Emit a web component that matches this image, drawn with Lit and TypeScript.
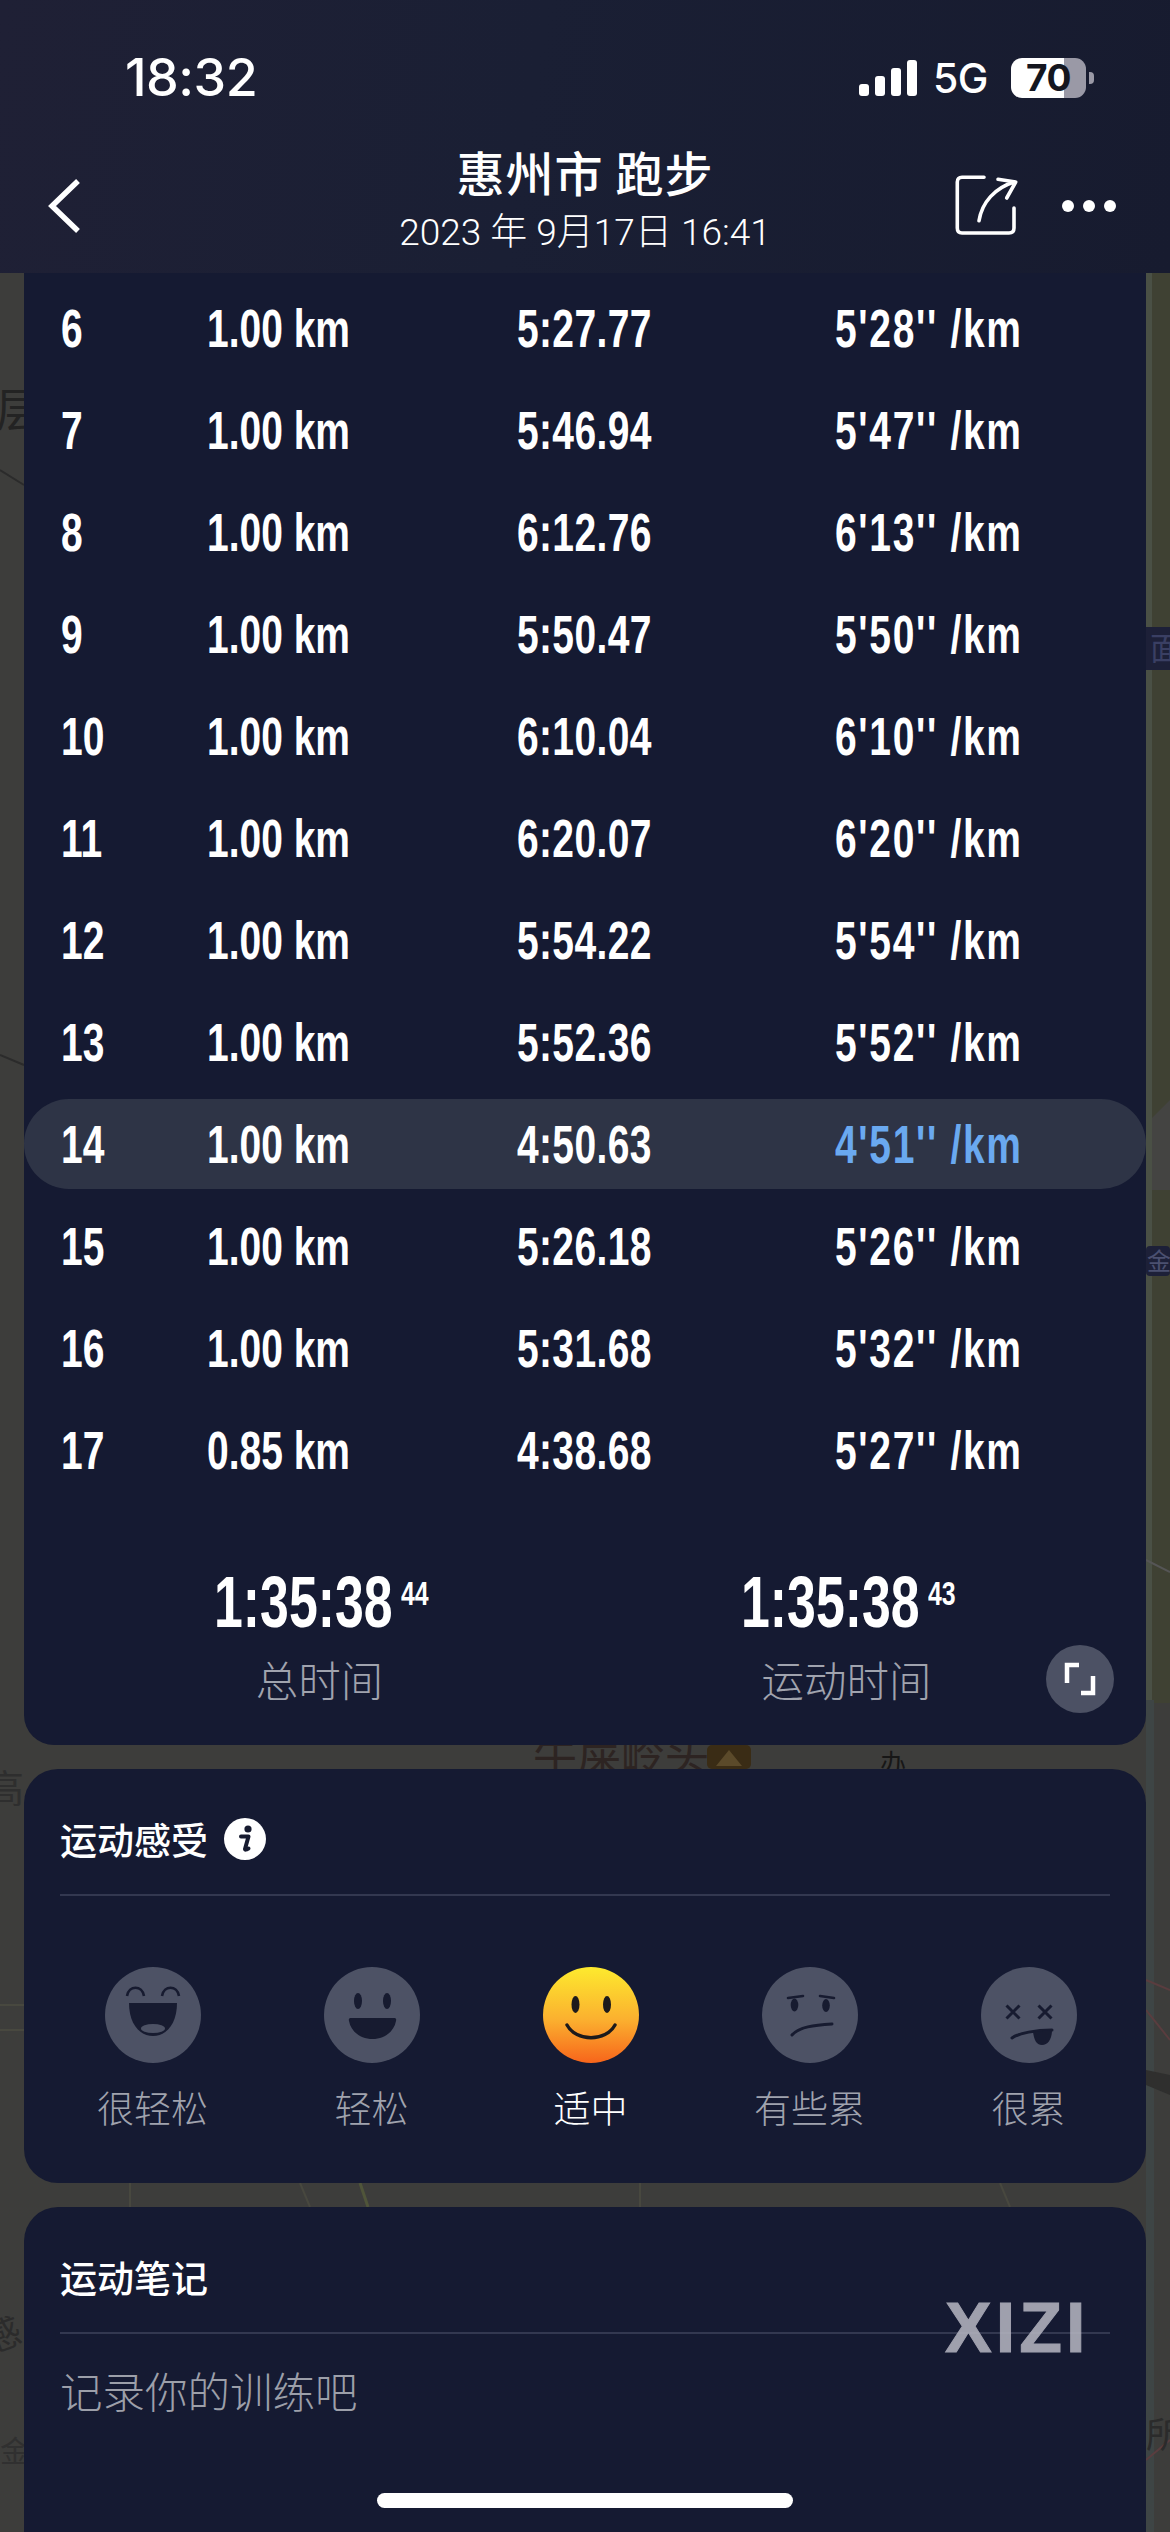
import { LitElement, html, css, svg } from "lit";
import { customElement } from "lit/decorators.js";

const rows = [
  ["6", "1.00 km", "5:27.77", "5'28'' /km"],
  ["7", "1.00 km", "5:46.94", "5'47'' /km"],
  ["8", "1.00 km", "6:12.76", "6'13'' /km"],
  ["9", "1.00 km", "5:50.47", "5'50'' /km"],
  ["10", "1.00 km", "6:10.04", "6'10'' /km"],
  ["11", "1.00 km", "6:20.07", "6'20'' /km"],
  ["12", "1.00 km", "5:54.22", "5'54'' /km"],
  ["13", "1.00 km", "5:52.36", "5'52'' /km"],
  ["14", "1.00 km", "4:50.63", "4'51'' /km"],
  ["15", "1.00 km", "5:26.18", "5'26'' /km"],
  ["16", "1.00 km", "5:31.68", "5'32'' /km"],
  ["17", "0.85 km", "4:38.68", "5'27'' /km"],
];

const D = "#171b30";
const faces = [
  { label: "很轻松", art: svg`<circle cx="48" cy="48" r="48" fill="#4d5265"/>
    <path d="M22 29C24 18 37 18 39 29M57 29C59 18 72 18 74 29" fill="none" stroke="${D}" stroke-width="2.6"/>
    <path d="M24 36H72C72 56 62 69 48 69C34 69 24 56 24 36Z" fill="${D}"/>
    <ellipse cx="48" cy="61.5" rx="12" ry="4.5" fill="#4d5265"/>` },
  { label: "轻松", art: svg`<circle cx="48" cy="48" r="48" fill="#4d5265"/>
    <ellipse cx="34" cy="34" rx="4" ry="8" fill="${D}"/><ellipse cx="63" cy="34" rx="4" ry="8" fill="${D}"/>
    <path d="M27 51H70C72 51 72.500 52 72 54C70 65 60 72 48.500 72C37 72 27 65 25 54C24.500 52 25 51 27 51Z" fill="${D}"/>` },
  { label: "适中", on: true, art: svg`<defs><linearGradient id="sun" x1="0" y1="0" x2="0" y2="1">
      <stop offset="0" stop-color="#fdea2e"/><stop offset=".55" stop-color="#fbb02f"/><stop offset="1" stop-color="#f7651b"/></linearGradient></defs>
    <circle cx="48" cy="48" r="48" fill="url(#sun)"/>
    <ellipse cx="32.500" cy="37.500" rx="4" ry="8.500" fill="#1d1a1c"/><ellipse cx="64" cy="37.500" rx="4" ry="8.500" fill="#1d1a1c"/>
    <path d="M24 58C33 75 63 75 72 58" fill="none" stroke="#1d1a1c" stroke-width="3.400" stroke-linecap="round"/>` },
  { label: "有些累", art: svg`<circle cx="48" cy="48" r="48" fill="#4d5265"/>
    <path d="M26 31L41 29M58 29L72 31" stroke="${D}" stroke-width="2.600" stroke-linecap="round"/>
    <ellipse cx="32.500" cy="38" rx="3.800" ry="6.500" fill="${D}"/><ellipse cx="64" cy="38.500" rx="3.800" ry="6.500" fill="${D}"/>
    <path d="M30 68C37 60 52 58 70 57" fill="none" stroke="${D}" stroke-width="3" stroke-linecap="round"/>` },
  { label: "很累", art: svg`<circle cx="48" cy="48" r="48" fill="#4d5265"/>
    <path d="M25.500 38.500L38.500 51.500M38.500 38.500L25.500 51.500M57.500 38.500L70.500 51.500M70.500 38.500L57.500 51.500" stroke="${D}" stroke-width="3"/>
    <path d="M31 71C38 66 55 63 71 63" fill="none" stroke="${D}" stroke-width="3" stroke-linecap="round"/>
    <path d="M52 65L71 63C71 72 67 78 61 78C55 78 53 72 52 65Z" fill="${D}"/>` },
];

@customElement("app-root")
export class AppRoot extends LitElement {
  static styles = css`
    :host {
      display: block; width: 1170px; height: 2532px; position: relative; overflow: hidden;
      background: #3d3d3b; color: #fff;
      font-family: "Noto Sans CJK SC", "Noto Sans", sans-serif;
    }
    .map { position: absolute; inset: 0; }
    .maptext { font-family: "Noto Sans CJK SC", sans-serif; }
    .page { position: relative; height: 100%; display: flex; flex-direction: column; }
    .head {
      height: 273px; flex: none; box-sizing: border-box;
      background: linear-gradient(100deg, #1f2035 0%, #1a1f34 45%, #171b2f 100%);
      display: flex; flex-direction: column;
    }
    .status { display: flex; align-items: center; height: 72px; margin-top: 42px; padding: 0 84px 0 125px; }
    .time { font: 500 52px/72px Inter, sans-serif; letter-spacing: -.5px; flex: 1; }
    .bars { display: flex; align-items: flex-end; gap: 6px; height: 36px; margin-right: 16px; }
    .bars i { width: 10px; background: #fff; border-radius: 3px; }
    .net { font: 500 41px/72px Inter, sans-serif; margin-right: 23px; letter-spacing: -.5px; }
    .batt { position: relative; width: 75px; height: 40px; border-radius: 11px; overflow: hidden;
      background: linear-gradient(90deg, #fff 0 53px, #9a99a6 53px); color: #14161f;
      font: 700 37px/40px Inter, sans-serif; text-align: center; letter-spacing: -.5px; }
    .nub { width: 5px; height: 12px; background: #9a99a6; border-radius: 0 4px 4px 0; margin-left: 3px; margin-right: -8px; }
    .nav { display: grid; grid-template-columns: 1fr auto 1fr; align-items: center; padding: 29px 54px 0 54px; }
    .back { margin: 9px 0 0 -8px; }
    .title { text-align: center; }
    .t1 { font-size: 48px; font-weight: 500; line-height: 56px; letter-spacing: 1px; }
    .t2 { font-size: 37px; font-weight: 300; line-height: 52px; margin-top: 8px; font-family: Roboto, "Noto Sans CJK SC", sans-serif; }
    .actions { display: flex; justify-content: flex-end; align-items: center; gap: 43px; margin-top: 9px; }
    .dots { display: flex; gap: 9px; }
    .dots i { width: 12px; height: 12px; border-radius: 50%; background: #fff; }
    svg { display: block; }

    .card { margin: 0 24px; background: #151a32; flex: none; position: relative; box-sizing: border-box; }
    .c1 { height: 1472px; border-radius: 0 0 30px 30px; padding-top: 10px; }
    .c2 { height: 414px; margin-top: 24px; border-radius: 34px; padding: 44px 36px 0; }
    .c3 { flex: 1; margin-top: 24px; border-radius: 34px 34px 0 0; padding: 44px 36px 0; }

    .rows { display: flex; flex-direction: column; gap: 12px; }
    .row {
      height: 90px; box-sizing: border-box; padding-top: 2px; display: grid;
      grid-template-columns: 146px 310px 317px 1fr; align-items: center;
      padding-left: 37px; border-radius: 45px;
      font: 700 53px/88px "Liberation Sans", sans-serif;
    }
    .row div { transform: scaleX(.735); transform-origin: left center; white-space: nowrap; }
    .row .tm { letter-spacing: .5px; }
    .row .pace { letter-spacing: 2.3px; margin-left: 1px; }
    .row.best { background: #2e3446; }
    .row.best .pace { color: #6aa9f0; }

    .sum { display: grid; grid-template-columns: 527px 527px; padding-left: 32px; margin-top: 67px; }
    .cell { display: flex; flex-direction: column; align-items: center; }
    .num { display: flex; width: 212px; font: 700 72px/80px "Liberation Sans", sans-serif; }
    .big { flex: none; width: 187px; transform: scaleX(.72); transform-origin: left center; white-space: nowrap; }
    .num sup { flex: none; font-size: 34px; line-height: 44px; transform: scaleX(.73); transform-origin: left center; margin: 9px 0 0; }
    .lab { font-size: 42.5px; font-weight: 300; line-height: 56px; color: #a0a3ae; margin-top: 9px; }
    .expand { position: absolute; left: 1022px; top: 1372px; width: 68px; height: 68px; border-radius: 50%; background: #4c5164;
      display: flex; align-items: center; justify-content: center; }

    .h { display: flex; align-items: center; gap: 16px; height: 52px; font-size: 37px; font-weight: 500; line-height: 52px; }
    .rule { height: 2px; background: #333850; margin-top: 29px; }
    .faces { display: grid; grid-template-columns: repeat(5, 219px); margin: 71px 0 0 -17px; }
    .face { display: flex; flex-direction: column; align-items: center; }
    .face span { font-size: 37px; font-weight: 300; line-height: 52px; color: #a0a3ae; margin-top: 18px; }
    .face.on span { color: #fff; }
    .note { font-size: 42.5px; font-weight: 300; line-height: 60px; color: #9c9fa9; margin-top: 26px; }

    .mark { position: absolute; left: 945px; top: 2296px; font: 700 70px/64px "Liberation Sans", sans-serif; letter-spacing: 4px; color: #b3b3bf; opacity: .88; -webkit-text-stroke: 1px #b3b3bf; }
    .homebar { position: absolute; left: 377px; top: 2493px; width: 416px; height: 15px; border-radius: 8px; background: #fff; }
  `;

  render() {
    return html`
      <svg class="map" width="1170" height="2532" viewBox="0 0 1170 2532">
        <rect x="1146" y="273" width="24" height="1430" fill="#3f4133"/>
        <rect x="1146" y="273" width="6" height="1430" fill="#4a5045"/>
        <rect x="1146" y="1700" width="8" height="832" fill="#3e4545"/>
        <path d="M0 470L24 485M0 1055L24 1065" stroke="#2b2b2b" stroke-width="2" fill="none"/>
        <path d="M1146 1560L1170 1572" stroke="#555" stroke-width="2" fill="none"/>
        <path d="M1152 1118V1190H1170V1100Z" fill="#444442"/>
        <path d="M0 2005H24M0 2030H24M130 2183V2207M300 2183L310 2207M640 2183V2207M1000 2183L1010 2207" stroke="#48483f" stroke-width="2"/>
        <path d="M360 2183L368 2207" stroke="#50553a" stroke-width="3"/>
        <path d="M1146 2010L1170 2040M1146 2460L1170 2440" stroke="#5a3d3f" stroke-width="2" fill="none"/>
        <path d="M1146 1980L1170 1990" stroke="#5a3d3f" stroke-width="2" fill="none"/>
        <path d="M1146 2085L1170 2095V2075L1146 2070Z" fill="#2f2f2e"/>
        <rect x="707" y="1745" width="44" height="24" rx="5" fill="#3a2c15"/>
        <path d="M729 1750L742 1766H716Z" fill="#5b4a2a"/>
        <text x="533" y="1772" font-size="44" fill="#2d2422" class="maptext">牛屎岭头</text>
        <text x="880" y="1773" font-size="26" fill="#171717" class="maptext">办</text>
        <text x="-4" y="426" font-size="46" fill="#232323" class="maptext">层</text>
        <text x="-14" y="1802" font-size="38" fill="#2e2e2e" class="maptext">高</text>
        <text x="-10" y="2350" font-size="36" fill="#2b2b2b" transform="rotate(-20 0 2350)" class="maptext">感</text>
        <text x="0" y="2462" font-size="30" fill="#303030" class="maptext">金</text>
        <text x="1146" y="2448" font-size="36" fill="#2b2b2b" class="maptext">所</text>
        <rect x="1146" y="627" width="24" height="43" fill="#1d2038"/>
        <text x="1150" y="660" font-size="32" fill="#3a3f63" class="maptext">面</text>
        <rect x="1146" y="1246" width="24" height="30" rx="4" fill="#1d2038"/>
        <text x="1147" y="1270" font-size="24" fill="#4b5070" class="maptext">金</text>
      </svg>

      <div class="page">
        <header class="head">
          <div class="status">
            <div class="time">18:32</div>
            <div class="bars"><i style="height:12px"></i><i style="height:20px"></i><i style="height:28px"></i><i style="height:36px"></i></div>
            <div class="net">5G</div>
            <div class="batt">70</div>
            <div class="nub"></div>
          </div>
          <div class="nav">
            <svg class="back" width="40" height="60" viewBox="0 0 40 60"><path d="M32 5L6 30L32 55" fill="none" stroke="#fff" stroke-width="5.500"/></svg>
            <div class="title">
              <div class="t1">惠州市 跑步</div>
              <div class="t2">2023 年 9月17日 16:41</div>
            </div>
            <div class="actions">
              <svg width="64" height="64" viewBox="0 0 64 64" fill="none" stroke="#fff" stroke-width="3.600" stroke-linecap="round" stroke-linejoin="round">
                <path d="M29 3.300H7Q2.300 3.300 2.300 8V54Q2.300 59 7 59H54Q59 59 59 54V34"/>
                <path d="M24 46.700C27 28 40 14 59 8M43 5.300L60.700 8L51.700 24"/>
              </svg>
              <div class="dots"><i></i><i></i><i></i></div>
            </div>
          </div>
        </header>

        <section class="card c1">
          <div class="rows">
            ${rows.map((r) => html`<div class="row ${r[0] === "14" ? "best" : ""}">
              <div>${r[0]}</div><div>${r[1]}</div><div class="tm">${r[2]}</div><div class="pace">${r[3]}</div>
            </div>`)}
          </div>
          <div class="sum">
            <div class="cell"><div class="num"><span class="big">1:35:38</span><sup>44</sup></div><div class="lab">总时间</div></div>
            <div class="cell"><div class="num"><span class="big">1:35:38</span><sup>43</sup></div><div class="lab">运动时间</div></div>
          </div>
          <div class="expand">
            <svg width="40" height="40" viewBox="0 0 40 40" fill="none" stroke="#fff" stroke-width="4.500">
              <path d="M19 6H7V24M21 34H33V17"/>
            </svg>
          </div>
        </section>

        <section class="card c2">
          <div class="h">运动感受
            <svg width="42" height="42" viewBox="0 0 42 42"><circle cx="21" cy="21" r="21" fill="#fff"/>
              <circle cx="24" cy="11" r="3.600" fill="${D}"/>
              <path d="M17 18.500H24.500L21 31Q20.800 32.500 24.500 30.500" fill="none" stroke="${D}" stroke-width="4" stroke-linecap="round" stroke-linejoin="round"/></svg>
          </div>
          <div class="rule"></div>
          <div class="faces">
            ${faces.map((f) => html`<div class="face ${f.on ? "on" : ""}">
              <svg width="96" height="96" viewBox="0 0 96 96">${f.art}</svg><span>${f.label}</span></div>`)}
          </div>
        </section>

        <section class="card c3">
          <div class="h">运动笔记</div>
          <div class="rule"></div>
          <div class="note">记录你的训练吧</div>
        </section>
      </div>
      <div class="mark">XIZI</div>
      <div class="homebar"></div>
    `;
  }
}
